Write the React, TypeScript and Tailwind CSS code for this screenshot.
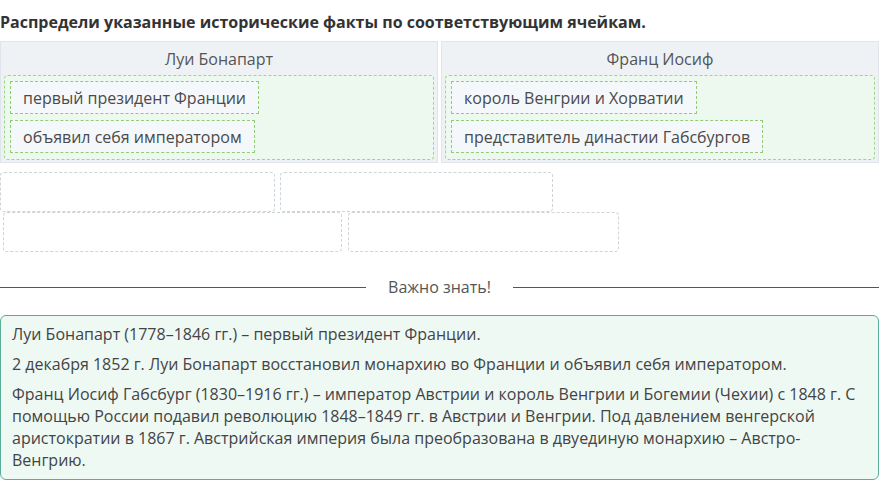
import React from "react";

const Item = ({ children }: { children: React.ReactNode }) => (
  <div className="h-[33px] flex items-center px-[12px] border border-dashed border-[#8fcd72] bg-[#f5f8fa] text-[16px] text-[#4a4a4a] whitespace-nowrap">
    {children}
  </div>
);

const Column = ({ title, items }: { title: string; items: string[] }) => (
  <div className="flex-1 flex flex-col border border-[#dfe5ea] bg-[#eef2f5]">
    <div className="h-[33px] flex items-center justify-center text-[16px] text-[#555]">{title}</div>
    <div className="mx-[3px] mb-[2px] rounded-[4px] border border-dashed border-[#9fd58a] bg-[#edf9ef] pt-[5px] px-[5px] pb-[6px] flex flex-col items-start gap-[6px]">
      {items.map((t) => (
        <Item key={t}>{t}</Item>
      ))}
    </div>
  </div>
);

const Slot = ({ w }: { w: string }) => (
  <div className={`h-[40px] rounded-[4px] border border-dashed border-[#cdd4da] bg-white ${w}`} />
);

export default function App() {
  return (
    <div className="w-[885px] h-[490px] bg-white overflow-hidden font-['Open_Sans',sans-serif] text-[#444]">
      <h1 className="pt-[12px] text-[16px] leading-[20px] font-bold text-[#333]">
        Распредели указанные исторические факты по соответствующим ячейкам.
      </h1>
      <div className="mt-[9px] w-[879px] flex gap-[3px]">
        <Column title="Луи Бонапарт" items={["первый президент Франции", "объявил себя императором"]} />
        <Column title="Франц Иосиф" items={["король Венгрии и Хорватии", "представитель династии Габсбургов"]} />
      </div>
      <div className="mt-[9px] flex flex-col">
        <div className="flex gap-[5px]">
          <Slot w="w-[275px]" />
          <Slot w="w-[273px]" />
        </div>
        <div className="flex gap-[6px] pl-[3px]">
          <Slot w="w-[339px]" />
          <Slot w="w-[271px]" />
        </div>
      </div>
      <div className="mt-[24px] w-[879px] flex items-center gap-[22px]">
        <div className="flex-1 h-px bg-[#555]" />
        <div className="text-[16px] leading-[22px] text-[#555]">Важно знать!</div>
        <div className="flex-1 h-px bg-[#555]" />
      </div>
      <div className="mt-[17px] w-[879px] rounded-[6px] border border-[#5aae98] bg-[#eef9f4] px-[11px] pt-[7px] pb-[8px] text-[16px] leading-[22px] text-[#444]">
        <p>Луи Бонапарт (1778–1846 гг.) – первый президент Франции.</p>
        <p className="mt-[8px]">2 декабря 1852 г. Луи Бонапарт восстановил монархию во Франции и объявил себя императором.</p>
        <p className="mt-[8px]">
          Франц Иосиф Габсбург (1830–1916 гг.) – император Австрии и король Венгрии и Богемии (Чехии) с 1848 г. С помощью России подавил революцию 1848–1849 гг. в Австрии и Венгрии. Под давлением венгерской аристократии в 1867 г. Австрийская империя была преобразована в двуединую монархию – Австро-Венгрию.
        </p>
      </div>
    </div>
  );
}
